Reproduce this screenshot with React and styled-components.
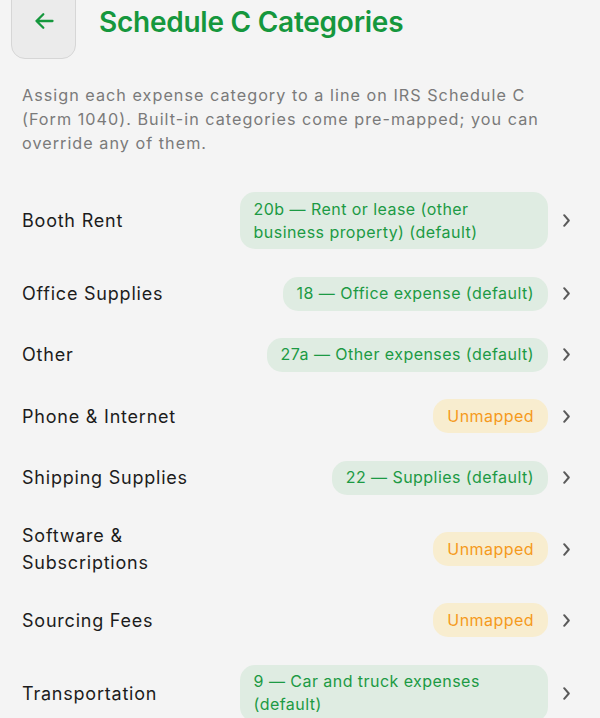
import React from "react";
import styled, { createGlobalStyle } from "styled-components";

const Global = createGlobalStyle`
  html, body { margin: 0; padding: 0; background: #f4f4f4; }
  body { font-family: Inter, "Noto Sans", "DejaVu Sans", sans-serif; -webkit-font-smoothing: antialiased; }
  #root { min-height: 718px; overflow: hidden; }
`;

const Page = styled.div`
  width: 600px;
  height: 718px;
  overflow: hidden;
  background: #f4f4f4;
`;

const Header = styled.header`
  display: flex;
  align-items: center;
  gap: 23px;
  height: 76px;
  margin-top: -17px;
  padding-left: 11px;
`;

const BackButton = styled.button`
  width: 65px;
  height: 76px;
  box-sizing: border-box;
  border: 1px solid #d6d6d6;
  border-radius: 14px;
  background: #ebebeb;
  display: flex;
  align-items: center;
  justify-content: center;
  padding: 0;
  cursor: pointer;
`;

const Title = styled.h1`
  margin: 0;
  padding-top: 2px;
  font-size: 28px;
  font-weight: 600;
  color: #15973d;
  letter-spacing: -0.25px;
`;

const Description = styled.p`
  margin: 24px 0 23.5px;
  padding: 0 40px 0 22px;
  font-size: 16.2px;
  line-height: 24px;
  color: #7a7a7a;
  letter-spacing: 1.02px;
`;

const List = styled.div`
  display: flex;
  flex-direction: column;
`;

const Row = styled.div`
  display: flex;
  align-items: center;
  gap: 12px;
  padding: 13.7px 30px 13.7px 22px;
`;

const Label = styled.div`
  flex: 2 1 0;
  min-width: 0;
  font-size: 18px;
  line-height: 27px;
  color: #1c1c1c;
  letter-spacing: 0.78px;
`;

const ValueWrap = styled.div`
  flex: 3 1 0;
  min-width: 0;
  display: flex;
  justify-content: flex-end;
`;

const Pill = styled.span`
  display: inline-block;
  box-sizing: border-box;
  max-width: 100%;
  padding: 5.5px 14px;
  border-radius: 15px;
  font-size: 16px;
  line-height: 23px;
  letter-spacing: 0.45px;
  background: ${(p) => (p.$mapped ? "#dfece2" : "#f8edcf")};
  color: ${(p) => (p.$mapped ? "#1c9a44" : "#f59a1c")};
`;

const Chevron = styled.svg`
  flex: none;
  width: 7px;
  height: 13px;
  margin-left: 3px;
`;

const rows = [
  { name: "Booth Rent", value: "20b — Rent or lease (other business property) (default)" },
  { name: "Office Supplies", value: "18 — Office expense (default)" },
  { name: "Other", value: "27a — Other expenses (default)" },
  { name: "Phone & Internet", value: null },
  { name: "Shipping Supplies", value: "22 — Supplies (default)" },
  { name: "Software & Subscriptions", value: null },
  { name: "Sourcing Fees", value: null },
  { name: "Transportation", value: "9 — Car and truck expenses (default)" },
];

export default function App() {
  return (
    <>
      <Global />
      <Page>
        <Header>
          <BackButton aria-label="Back">
            <svg width="22" height="22" viewBox="0 0 22 22" fill="none">
              <path
                d="M19.5 11H3.5M10.3 4.2L3.5 11l6.8 6.8"
                stroke="#15973d"
                strokeWidth="2.3"
                strokeLinecap="round"
                strokeLinejoin="round"
              />
            </svg>
          </BackButton>
          <Title>Schedule C Categories</Title>
        </Header>
        <Description>
          Assign each expense category to a line on IRS Schedule C (Form 1040).
          Built-in categories come pre-mapped; you can override any of them.
        </Description>
        <List>
          {rows.map((r) => (
            <Row key={r.name}>
              <Label>{r.name}</Label>
              <ValueWrap>
                <Pill $mapped={!!r.value}>{r.value || "Unmapped"}</Pill>
              </ValueWrap>
              <Chevron viewBox="0 0 7 13" fill="none">
                <path
                  d="M1.2 1.2L5.8 6.5L1.2 11.8"
                  stroke="#5a5a5a"
                  strokeWidth="2"
                  strokeLinecap="round"
                  strokeLinejoin="round"
                />
              </Chevron>
            </Row>
          ))}
        </List>
      </Page>
    </>
  );
}
